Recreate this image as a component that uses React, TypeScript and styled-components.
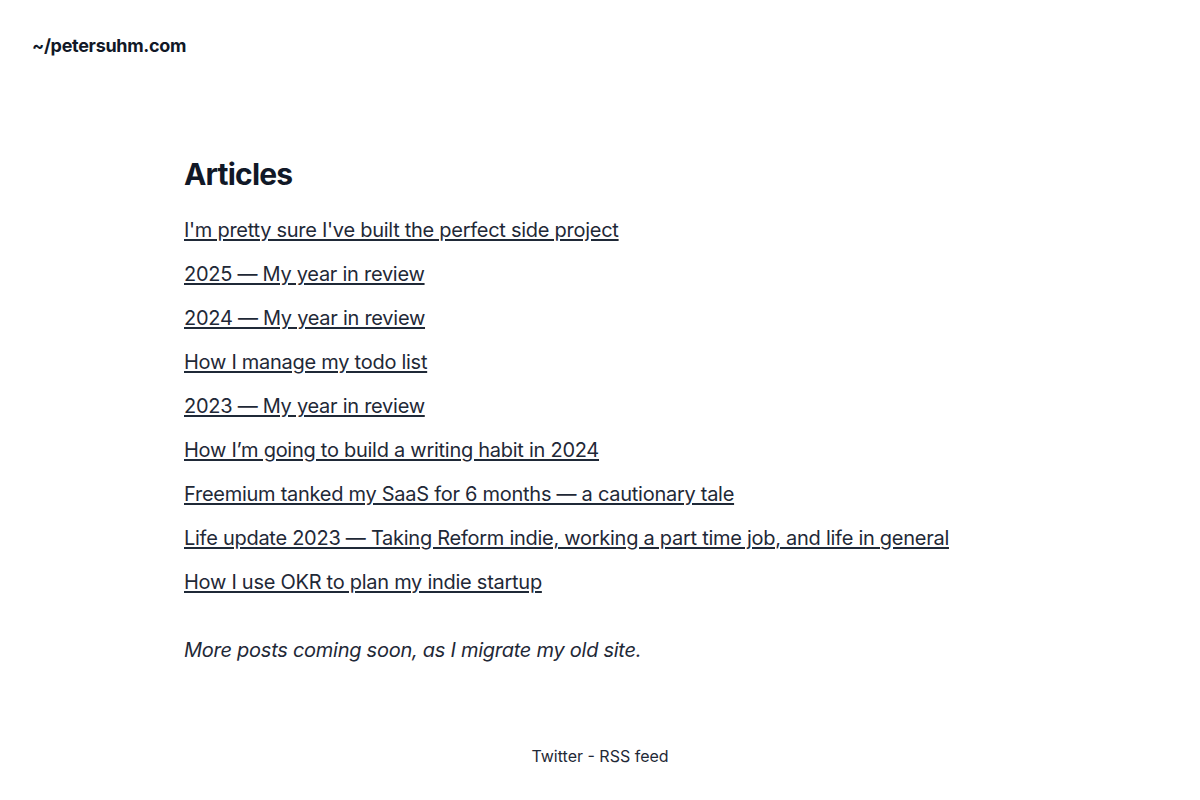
import * as React from "react";
import styled, { createGlobalStyle } from "styled-components";

const GlobalStyle = createGlobalStyle`
  html, body {
    margin: 0;
    padding: 0;
    background: #fff;
    font-family: Inter, "Noto Sans", sans-serif;
    color: #111827;
  }
`;

const Page = styled.div`
  min-height: 800px;
  display: flex;
  flex-direction: column;
`;

const Header = styled.header`
  padding: 34px 32px 0;
`;

const SiteName = styled.a`
  font-size: 18px;
  font-weight: 700;
  line-height: 24px;
  letter-spacing: -0.3px;
  color: #111827;
  text-decoration: none;
`;

const Main = styled.main`
  width: 832px;
  margin: 0 auto;
  padding-top: 98px;
`;

const Title = styled.h1`
  margin: 0 0 24px;
  font-size: 30px;
  line-height: 36px;
  font-weight: 700;
  color: #111827;
  letter-spacing: -0.8px;
`;

const PostList = styled.ul`
  list-style: none;
  margin: 0;
  padding: 0;
  display: flex;
  flex-direction: column;
  gap: 16px;
`;

const PostLink = styled.a`
  font-size: 20px;
  line-height: 28px;
  letter-spacing: -0.27px;
  color: #1f2937;
  text-decoration: underline;
  text-decoration-thickness: 1.5px;
  text-underline-offset: 2px;
`;

const Note = styled.p`
  margin: 40px 0 0;
  font-size: 20px;
  line-height: 28px;
  letter-spacing: -0.26px;
  font-style: italic;
  color: #1f2937;
`;

const Footer = styled.footer`
  margin-top: 80px;
  text-align: center;
  font-size: 16px;
  line-height: 24px;
  color: #1f2937;

  a {
    color: inherit;
    text-decoration: none;
  }
`;

const posts = [
  "I'm pretty sure I've built the perfect side project",
  "2025 — My year in review",
  "2024 — My year in review",
  "How I manage my todo list",
  "2023 — My year in review",
  "How I’m going to build a writing habit in 2024",
  "Freemium tanked my SaaS for 6 months — a cautionary tale",
  "Life update 2023 — Taking Reform indie, working a part time job, and life in general",
  "How I use OKR to plan my indie startup",
];

export default function App() {
  return (
    <Page>
      <GlobalStyle />
      <Header>
        <SiteName href="#">~/petersuhm.com</SiteName>
      </Header>
      <Main>
        <Title>Articles</Title>
        <PostList>
          {posts.map((title) => (
            <li key={title}>
              <PostLink href="#">{title}</PostLink>
            </li>
          ))}
        </PostList>
        <Note>More posts coming soon, as I migrate my old site.</Note>
      </Main>
      <Footer>
        <a href="#">Twitter</a> - <a href="#">RSS feed</a>
      </Footer>
    </Page>
  );
}
